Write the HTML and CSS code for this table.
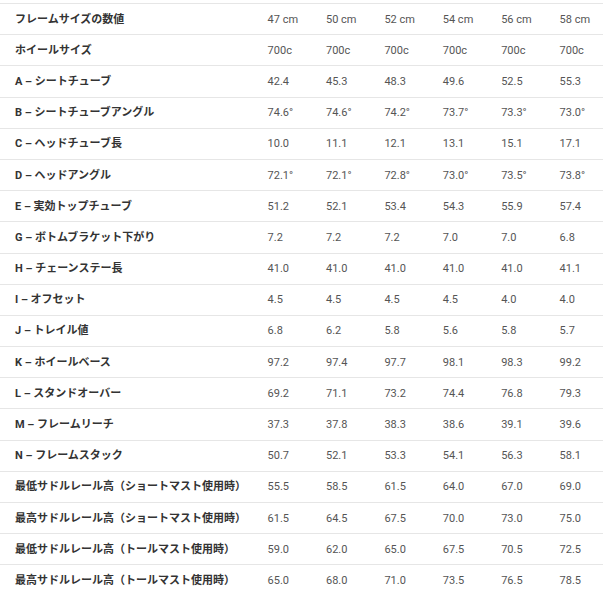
FILE: index.html
```html
<!DOCTYPE html>
<html lang="ja">
<head>
<meta charset="utf-8">
<title>ジオメトリー</title>
<link rel="stylesheet" href="styles.css">
</head>
<body>
<div class="wrap">
<table class="geo">
<colgroup><col class="c-label"><col class="c-val"><col class="c-val"><col class="c-val"><col class="c-val"><col class="c-val"><col class="c-val"></colgroup>
<tbody>
<tr><th>フレームサイズの数値</th><td>47 cm</td><td>50 cm</td><td>52 cm</td><td>54 cm</td><td>56 cm</td><td>58 cm</td></tr>
<tr><th>ホイールサイズ</th><td>700c</td><td>700c</td><td>700c</td><td>700c</td><td>700c</td><td>700c</td></tr>
<tr><th>A – シートチューブ</th><td>42.4</td><td>45.3</td><td>48.3</td><td>49.6</td><td>52.5</td><td>55.3</td></tr>
<tr><th>B – シートチューブアングル</th><td>74.6°</td><td>74.6°</td><td>74.2°</td><td>73.7°</td><td>73.3°</td><td>73.0°</td></tr>
<tr><th>C – ヘッドチューブ長</th><td>10.0</td><td>11.1</td><td>12.1</td><td>13.1</td><td>15.1</td><td>17.1</td></tr>
<tr><th>D – ヘッドアングル</th><td>72.1°</td><td>72.1°</td><td>72.8°</td><td>73.0°</td><td>73.5°</td><td>73.8°</td></tr>
<tr><th>E – 実効トップチューブ</th><td>51.2</td><td>52.1</td><td>53.4</td><td>54.3</td><td>55.9</td><td>57.4</td></tr>
<tr><th>G – ボトムブラケット下がり</th><td>7.2</td><td>7.2</td><td>7.2</td><td>7.0</td><td>7.0</td><td>6.8</td></tr>
<tr><th>H – チェーンステー長</th><td>41.0</td><td>41.0</td><td>41.0</td><td>41.0</td><td>41.0</td><td>41.1</td></tr>
<tr><th>I – オフセット</th><td>4.5</td><td>4.5</td><td>4.5</td><td>4.5</td><td>4.0</td><td>4.0</td></tr>
<tr><th>J – トレイル値</th><td>6.8</td><td>6.2</td><td>5.8</td><td>5.6</td><td>5.8</td><td>5.7</td></tr>
<tr><th>K – ホイールベース</th><td>97.2</td><td>97.4</td><td>97.7</td><td>98.1</td><td>98.3</td><td>99.2</td></tr>
<tr><th>L – スタンドオーバー</th><td>69.2</td><td>71.1</td><td>73.2</td><td>74.4</td><td>76.8</td><td>79.3</td></tr>
<tr><th>M – フレームリーチ</th><td>37.3</td><td>37.8</td><td>38.3</td><td>38.6</td><td>39.1</td><td>39.6</td></tr>
<tr><th>N – フレームスタック</th><td>50.7</td><td>52.1</td><td>53.3</td><td>54.1</td><td>56.3</td><td>58.1</td></tr>
<tr><th>最低サドルレール高（ショートマスト使用時）</th><td>55.5</td><td>58.5</td><td>61.5</td><td>64.0</td><td>67.0</td><td>69.0</td></tr>
<tr><th>最高サドルレール高（ショートマスト使用時）</th><td>61.5</td><td>64.5</td><td>67.5</td><td>70.0</td><td>73.0</td><td>75.0</td></tr>
<tr><th>最低サドルレール高（トールマスト使用時）</th><td>59.0</td><td>62.0</td><td>65.0</td><td>67.5</td><td>70.5</td><td>72.5</td></tr>
<tr><th>最高サドルレール高（トールマスト使用時）</th><td>65.0</td><td>68.0</td><td>71.0</td><td>73.5</td><td>76.5</td><td>78.5</td></tr>
</tbody>
</table>
</div>
</body>
</html>
```

FILE: styles.css
```css
html, body {
  margin: 0;
  padding: 0;
  background: #fff;
}

.wrap {
  padding-top: 3px;
  width: 603px;
}

.geo {
  width: 603px;
  border-collapse: collapse;
  table-layout: fixed;
  font-family: Roboto, "Noto Sans CJK JP", sans-serif;
  font-size: 11px;
  line-height: 15px;
}

.c-label { width: 252.6px; }
.c-val { width: 58.4px; }

.geo th,
.geo td {
  padding: 7.6px 0 7.6px 15px;
  border-top: 1px solid #e6e6e6;
  text-align: left;
  vertical-align: middle;
  white-space: nowrap;
}

.geo th {
  font-weight: 700;
  color: #333;
}

.geo td {
  font-weight: 400;
  color: #555;
}
```
